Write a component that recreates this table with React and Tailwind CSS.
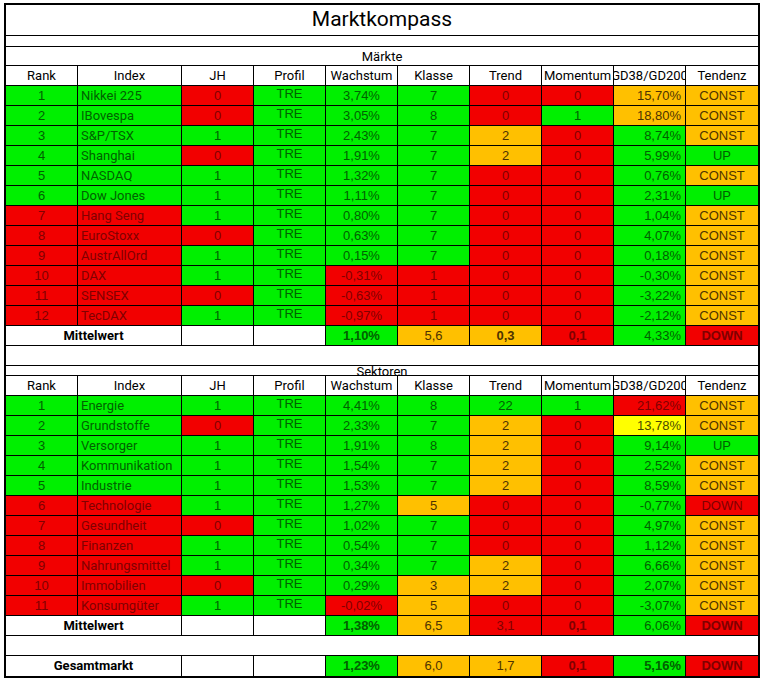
import React from "react";

const COLS = "grid grid-cols-[72px_104px_72px_72px_72px_72px_72px_72px_72px_72px]";
const APT = "font-['Roboto',sans-serif] text-[13px]";
const NUM = "font-['Liberation_Sans',Arial,sans-serif] text-[13px]";
const BG = {
  g: "bg-[#00f000] text-[#006100]",
  r: "bg-[#f20000] text-[#800000]",
  o: "bg-[#ffc000] text-[#4e3300]",
  y: "bg-[#ffff00] text-[#4a4a00]",
  w: "bg-white text-black",
};

// columns after Index: JH, Wachstum, Klasse, Trend, Momentum, GD38/GD200, Tendenz
const maerkte = [
  ["1", "Nikkei 225", "g", "0r", "3,74%g", "7g", "0r", "0r", "15,70%o", "CONSTo"],
  ["2", "IBovespa", "g", "0r", "3,05%g", "8g", "0r", "1g", "18,80%o", "CONSTo"],
  ["3", "S&P/TSX", "g", "1g", "2,43%g", "7g", "2o", "0r", "8,74%g", "CONSTo"],
  ["4", "Shanghai", "g", "0r", "1,91%g", "7g", "2o", "0r", "5,99%g", "UPg"],
  ["5", "NASDAQ", "g", "1g", "1,32%g", "7g", "0r", "0r", "0,76%g", "CONSTo"],
  ["6", "Dow Jones", "g", "1g", "1,11%g", "7g", "0r", "0r", "2,31%g", "UPg"],
  ["7", "Hang Seng", "r", "1g", "0,80%g", "7g", "0r", "0r", "1,04%g", "CONSTo"],
  ["8", "EuroStoxx", "r", "0r", "0,63%g", "7g", "0r", "0r", "4,07%g", "CONSTo"],
  ["9", "AustrAllOrd", "r", "1g", "0,15%g", "7g", "0r", "0r", "0,18%g", "CONSTo"],
  ["10", "DAX", "r", "1g", "-0,31%r", "1r", "0r", "0r", "-0,30%g", "CONSTo"],
  ["11", "SENSEX", "r", "0r", "-0,63%r", "1r", "0r", "0r", "-3,22%g", "CONSTo"],
  ["12", "TecDAX", "r", "1g", "-0,97%r", "1r", "0r", "0r", "-2,12%g", "CONSTo"],
];

const sektoren = [
  ["1", "Energie", "g", "1g", "4,41%g", "8g", "22g", "1g", "21,62%r", "CONSTo"],
  ["2", "Grundstoffe", "g", "0r", "2,33%g", "7g", "2o", "0r", "13,78%y", "CONSTo"],
  ["3", "Versorger", "g", "1g", "1,91%g", "8g", "2o", "0r", "9,14%g", "UPg"],
  ["4", "Kommunikation", "g", "1g", "1,54%g", "7g", "2o", "0r", "2,52%g", "CONSTo"],
  ["5", "Industrie", "g", "1g", "1,53%g", "7g", "2o", "0r", "8,59%g", "CONSTo"],
  ["6", "Technologie", "r", "1g", "1,27%g", "5o", "0r", "0r", "-0,77%g", "DOWNr"],
  ["7", "Gesundheit", "r", "0r", "1,02%g", "7g", "0r", "0r", "4,97%g", "CONSTo"],
  ["8", "Finanzen", "r", "1g", "0,54%g", "7g", "0r", "0r", "1,12%g", "CONSTo"],
  ["9", "Nahrungsmittel", "r", "1g", "0,34%g", "7g", "2o", "0r", "6,66%g", "CONSTo"],
  ["10", "Immobilien", "r", "0r", "0,29%g", "3o", "2o", "0r", "2,07%g", "CONSTo"],
  ["11", "Konsumgüter", "r", "1g", "-0,02%r", "5o", "0r", "0r", "-3,07%g", "CONSTo"],
];

const parse = (s) => {
  let bold = false;
  if (s.endsWith("B")) {
    bold = true;
    s = s.slice(0, -1);
  }
  return { v: s.slice(0, -1), c: s.slice(-1), bold };
};

const headers = ["Rank", "Index", "JH", "Profil", "Wachstum", "Klasse", "Trend", "Momentum", "GD38/GD200", "Tendenz"];

function Cell({ className = "", children }) {
  return <div className={`border-r border-black flex items-center overflow-hidden whitespace-nowrap ${className}`}>{children}</div>;
}

function LastCell({ className = "", children }) {
  return <div className={`flex items-center overflow-hidden whitespace-nowrap ${className}`}>{children}</div>;
}

function HeaderRow() {
  return (
    <div className={`${COLS} h-[20px] border-b border-black bg-white text-black ${APT}`}>
      {headers.map((h, i) =>
        i === 9 ? (
          <LastCell key={h} className="justify-center">{h}</LastCell>
        ) : (
          <Cell key={h} className="justify-center">{h}</Cell>
        )
      )}
    </div>
  );
}

function DataRow({ row }) {
  const [rank, name, rc, jh, wach, kl, tr, mom, gd, tend] = row;
  const [JH, WA, KL, TR, MO, GD, TE] = [jh, wach, kl, tr, mom, gd, tend].map(parse);
  return (
    <div className={`${COLS} h-[20px] border-b border-black`}>
      <Cell className={`${BG[rc]} ${NUM} justify-center`}>{rank}</Cell>
      <Cell className={`${BG[rc]} ${APT} justify-start pl-[3px]`}>{name}</Cell>
      <Cell className={`${BG[JH.c]} ${NUM} justify-center`}>{JH.v}</Cell>
      <Cell className={`${BG.g} ${NUM} justify-center pb-[3px]`}>TRE</Cell>
      <Cell className={`${BG[WA.c]} ${NUM} justify-center`}>{WA.v}</Cell>
      <Cell className={`${BG[KL.c]} ${NUM} justify-center`}>{KL.v}</Cell>
      <Cell className={`${BG[TR.c]} ${NUM} justify-center`}>{TR.v}</Cell>
      <Cell className={`${BG[MO.c]} ${NUM} justify-center`}>{MO.v}</Cell>
      <Cell className={`${BG[GD.c]} ${NUM} justify-end pr-[4px]`}>{GD.v}</Cell>
      <LastCell className={`${BG[TE.c]} ${NUM} justify-center`}>{TE.v}</LastCell>
    </div>
  );
}

function SummaryRow({ label, vals, last = false }) {
  const [WA, KL, TR, MO, GD, TE] = vals.map(parse);
  const b = (x) => (x.bold ? "font-bold" : "");
  return (
    <div className={`${COLS} h-[20px] ${last ? "" : "border-b border-black"}`}>
      <Cell className={`col-span-2 bg-white text-black ${APT} font-bold justify-center`}>{label}</Cell>
      <Cell className="bg-white" />
      <Cell className="bg-white" />
      <Cell className={`${BG[WA.c]} ${NUM} ${b(WA)} justify-center`}>{WA.v}</Cell>
      <Cell className={`${BG[KL.c]} ${NUM} ${b(KL)} justify-center`}>{KL.v}</Cell>
      <Cell className={`${BG[TR.c]} ${NUM} ${b(TR)} justify-center`}>{TR.v}</Cell>
      <Cell className={`${BG[MO.c]} ${NUM} ${b(MO)} justify-center`}>{MO.v}</Cell>
      <Cell className={`${BG[GD.c]} ${NUM} ${b(GD)} justify-end pr-[4px]`}>{GD.v}</Cell>
      <LastCell className={`${BG[TE.c]} ${NUM} ${b(TE)} justify-center`}>{TE.v}</LastCell>
    </div>
  );
}

export default function App() {
  return (
    <div className="bg-white w-[763px] h-[681px] pt-[3px] pl-[4px]">
      <div className="w-[756px] border-2 border-black bg-white">
        <div className="h-[31px] border-b border-black flex items-center justify-center">
          <span className="font-['Roboto',sans-serif] text-[21px] text-black">Marktkompass</span>
        </div>
        <div className="h-[11px] border-b border-black" />
        <div className={`h-[19px] border-b border-black flex items-end justify-center pb-[1px] ${APT} leading-[15px]`}>Märkte</div>
        <HeaderRow />
        {maerkte.map((r) => (
          <DataRow key={r[0]} row={r} />
        ))}
        <SummaryRow label="Mittelwert" vals={["1,10%gB", "5,6o", "0,3oB", "0,1rB", "4,33%g", "DOWNrB"]} />
        <div className="h-[20px] border-b border-black" />
        <div className="h-[10px] border-b border-black overflow-hidden relative">
          <div className={`h-[9px] overflow-hidden flex items-end justify-center ${APT} leading-[13px]`}>
            <span className="mb-[-3px]">Sektoren</span>
          </div>
        </div>
        <HeaderRow />
        {sektoren.map((r) => (
          <DataRow key={r[0]} row={r} />
        ))}
        <SummaryRow label="Mittelwert" vals={["1,38%gB", "6,5o", "3,1r", "0,1rB", "6,06%g", "DOWNrB"]} />
        <div className="h-[20px] border-b border-black" />
        <SummaryRow label="Gesamtmarkt" last vals={["1,23%gB", "6,0o", "1,7o", "0,1rB", "5,16%gB", "DOWNrB"]} />
      </div>
    </div>
  );
}
